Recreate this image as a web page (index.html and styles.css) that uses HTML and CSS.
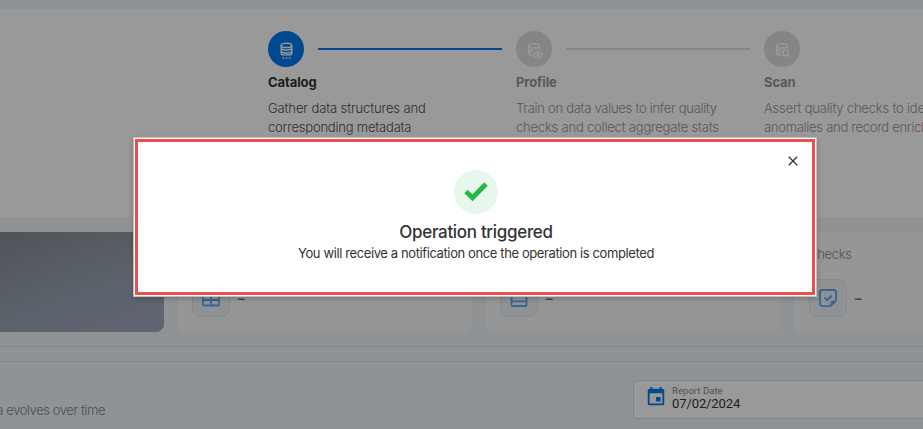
FILE: index.html
```html
<!DOCTYPE html>
<html lang="en">
<head>
<meta charset="utf-8">
<title>Operation triggered</title>
<link rel="stylesheet" href="styles.css">
</head>
<body>
<main class="page">
  <section class="steps">
    <article class="step active">
      <div class="step-head"><span class="step-icon"><svg viewBox="0 0 24 24"><ellipse cx="12" cy="4.800" rx="7.500" ry="3"/><path d="M4.500 4.800V15c0 2.200 1.500 3.200 3.500 3.200h8c2 0 3.500-1 3.500-3.200V4.800M4.500 9c1 2 4 2.500 7.500 2.500s6.500-.5 7.500-2.500M4.500 13.500c1 1.500 4 2 7.500 2s6.500-.5 7.500-2"/><path d="M6.500 22.500h2.200M10.900 22.500h2.200M15.300 22.500h2.200"/></svg></span><i></i></div>
      <h2>Catalog</h2>
      <p><span class="spaced">Gather data structures and</span><br><span class="medium">corresponding metadata</span></p>
    </article>
    <article class="step">
      <div class="step-head"><span class="step-icon"><svg viewBox="0 0 24 24"><ellipse cx="11" cy="5.500" rx="7.500" ry="3"/><path d="M3.500 5.500V16c0 2 2 3.200 5 3.500M18.500 5.500V12M3.500 10c1 2 4 2.500 7.500 2.500M3.500 14.500c.5 1 2 1.500 4.500 1.700"/><path d="M10.500 18.500c3-5.500 10-5.500 13 0-3 5-10 5-13 0z"/><circle cx="17" cy="18.300" r="1"/></svg></span><i></i></div>
      <h2>Profile</h2>
      <p><span class="tight">Train on data values to infer quality</span><br><span class="medium">checks and collect aggregate stats</span></p>
    </article>
    <article class="step">
      <div class="step-head"><span class="step-icon"><svg viewBox="0 0 24 24"><ellipse cx="11" cy="5.500" rx="7.500" ry="3"/><path d="M3.500 5.500V16c0 2 2 3.200 6.500 3.500M18.500 5.500V9M3.500 10c1 1.700 3 2.300 6.500 2.400M3.500 14.500c.5 1 2 1.500 5.500 1.700"/><circle cx="16.500" cy="15.500" r="4"/><path d="M19.500 18.500l4 4"/></svg></span><i></i></div>
      <h2>Scan</h2>
      <p><span class="medium">Assert quality checks to identify</span><br><span class="tight">anomalies and record enrichment</span></p>
    </article>
  </section>

  <section class="cards">
    <div class="card score"></div>
    <div class="card"><h3>Tables</h3><div class="metric"><span class="box"><svg viewBox="0 0 24 24"><rect x="4" y="4" width="16" height="15.500" rx="1"/><path d="M4 9h16M4 14h16M12 9v10.500"/></svg></span><b>–</b></div></div>
    <div class="card"><h3>Records</h3><div class="metric"><span class="box"><svg viewBox="0 0 24 24"><rect x="4.500" y="4" width="15" height="16" rx="1"/><path d="M4.500 10h15M4.500 15.300h15"/></svg></span><b>–</b></div></div>
    <div class="card"><h3>Checks</h3><div class="metric"><span class="box"><svg viewBox="0 0 24 24"><path d="M14.500 20.200H6.500a2.500 2.500 0 0 1-2.500-2.500V6.500A2.500 2.500 0 0 1 6.500 4h11A2.500 2.500 0 0 1 20 6.500v8.200zM8.500 11.500l2.700 2.700 4.600-4.700"/><path class="fold" d="M14.500 20.200v-3.500a2 2 0 0 1 2-2H20z"/></svg></span><b>–</b></div></div>
  </section>

  <div class="band"></div>

  <section class="report">
    <p><span>See how your data evolves over time</span></p>
    <div class="date">
      <svg viewBox="0 0 24 24"><path d="M19 3h-1V1h-2v2H8V1H6v2H5a2 2 0 0 0-2 2v14a2 2 0 0 0 2 2h14a2 2 0 0 0 2-2V5a2 2 0 0 0-2-2zm0 16H5V8h14v11zm-2-7h-5v5h5v-5z"/></svg>
      <div><label>Report Date</label><span>07/02/2024</span></div>
    </div>
  </section>
</main>

<div class="overlay">
  <div class="dialog" role="dialog">
    <svg class="close" viewBox="0 0 10 10"><path d="M.8.8l8.400 8.400M9.200.8L.8 9.200"/></svg>
    <svg class="done" viewBox="0 0 44 44"><circle cx="22" cy="22" r="22"/><path d="M12 21.500l6.500 6.300L32 14"/></svg>
    <h1>Operation triggered</h1>
    <p>You will receive a notification once the operation is completed</p>
  </div>
</div>
</body>
</html>
```

FILE: styles.css
```css
* { box-sizing: border-box; margin: 0; }
html, body { width: 923px; height: 429px; overflow: hidden; }
body { font-family: Inter, sans-serif; font-size: 13px; color: #333; background: #f0f5f8; }
svg { fill: none; stroke: currentColor; stroke-width: 2; display: block; flex: none; }
.page { height: 429px; overflow: hidden; padding-top: 9px; display: flex; flex-direction: column; }

.steps { flex: none; height: 208px; background: #fff; display: grid; grid-template-columns: repeat(3, 234px); gap: 14px; padding: 22px 0 0 268px; }
.step { color: #949494; white-space: nowrap; }
.step.active { color: #4d4d4d; }
.step-head { display: flex; align-items: center; gap: 14px; }
.step-icon { width: 36px; height: 36px; border-radius: 50%; background: #dedede; color: #fff; display: grid; place-items: center; flex: none; }
.step-icon svg { width: 17px; height: 17px; stroke-width: 2; margin-top: 2px; }
.step-head i { height: 2px; flex: 1; background: #dedede; }
.step:last-child i { visibility: hidden; }
.active .step-icon, .active i { background: #0079f0; }
.step h2 { font-size: 13px; line-height: 18px; font-weight: 650; margin-top: 6px; color: #949494; letter-spacing: -.1px; }
.step.active h2 { color: #333; }
.step p { margin-top: 8px; line-height: 19px; font-weight: 350; }
.spaced { letter-spacing: -.11px; }
.medium { letter-spacing: -.2px; }
.tight { letter-spacing: -.28px; }

.cards { flex: none; display: grid; grid-template-columns: repeat(4, 294px); gap: 14px; margin: 15px 0 14px -130px; }
.card { height: 100px; border-radius: 8px; background: #fafbfc; padding: 13px 14px; }
.score { background: linear-gradient(160deg, #868c94 25%, #99a4b2 65%, #a1a9c0); }
.card h3 { font-size: 13px; font-weight: 350; line-height: 19px; color: #8b8b8b; letter-spacing: -.3px; }
.metric { display: flex; align-items: center; gap: 8px; margin-top: 15px; }
.card:last-child .metric { padding-left: 1px; }
.box { width: 38px; height: 38px; border: 1px solid #dde4e8; border-radius: 8px; background: #eef4f8; color: #5fa8f2; display: grid; place-items: center; }
.box svg { width: 24px; height: 24px; stroke-width: 1.800; }
.box .fold { fill: currentColor; stroke: none; }
.metric b { font-weight: 700; font-size: 13px; color: #777; }

.band { flex: none; height: 16px; border: 1px solid #d8dde0; border-width: 1px 0; }
.report { display: flex; justify-content: space-between; padding-top: 18px; }
.report p { width: 105px; display: flex; justify-content: flex-end; white-space: nowrap; line-height: 18px; padding-top: 21px; color: #858585; font-weight: 350; letter-spacing: -.43px; }
.date { width: 290px; height: 39px; background: #fff; border: 1px solid #dadde0; border-right: 0; border-radius: 4px 0 0 4px; display: flex; align-items: flex-start; padding: 5px 12px; gap: 6px; font-family: Roboto, sans-serif; }
.date svg { width: 22px; height: 22px; margin: 0 -1px; fill: #0079f0; stroke: none; }
.date label { display: block; font-size: 9.500px; line-height: 10px; color: #888; letter-spacing: .05px; }
.date span { display: block; font-size: 13px; line-height: 15px; color: #333; letter-spacing: -.1px; }

.overlay { position: absolute; top: 0; left: 0; width: 923px; height: 429px; background: rgba(0,0,0,.4); display: flex; justify-content: flex-start; padding: 139px 0 0 135px; }
.dialog { position: relative; width: 680px; height: 156px; background: #fff; border: 3px solid #ec4d4d; box-shadow: 0 0 0 1px #fff, 0 0 0 2px #bfbfbf, 0 2px 5px 2px rgba(0,0,0,.2); display: flex; flex-direction: column; align-items: center; padding: 28px 0 0 2px; white-space: nowrap; }
.close { position: absolute; top: 14px; right: 14px; width: 10px; height: 10px; stroke-width: 1.300; }
.done { width: 44px; height: 44px; stroke: #22ba45; stroke-width: 4.800; }
.done circle { fill: #e7f7eb; stroke: none; }
.dialog h1 { font-size: 17px; font-weight: 550; line-height: 24px; margin-top: 6px; letter-spacing: -.32px; }
.dialog p { line-height: 18px; font-weight: 370; letter-spacing: -.39px; }
```
